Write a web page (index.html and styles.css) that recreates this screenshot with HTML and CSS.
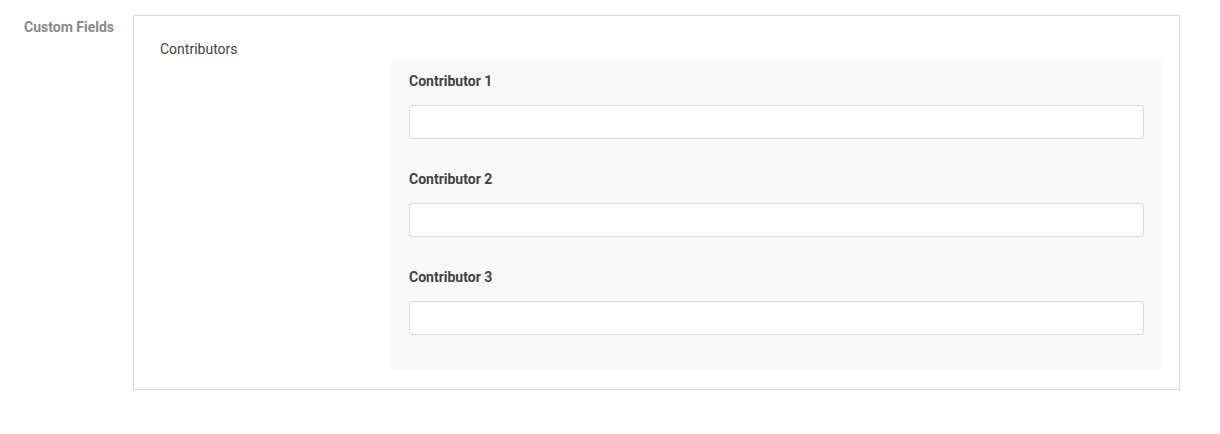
FILE: index.html
```html
<!DOCTYPE html>
<html>
<head>
<meta charset="utf-8">
<link rel="stylesheet" href="styles.css">
</head>
<body>
<div class="page">
  <div class="section-label">Custom Fields</div>
  <div class="box">
    <div class="field-title">Contributors</div>
    <div class="panel">
      <div class="group">
        <label class="sub-label">Contributor 1</label>
        <input class="text-input" type="text">
      </div>
      <div class="group">
        <label class="sub-label">Contributor 2</label>
        <input class="text-input" type="text">
      </div>
      <div class="group">
        <label class="sub-label">Contributor 3</label>
        <input class="text-input" type="text">
      </div>
    </div>
  </div>
</div>
</body>
</html>
```

FILE: styles.css
```css
* { box-sizing: border-box; }
html, body { margin: 0; padding: 0; background: #fff; }
body { font-family: Roboto, "Liberation Sans", sans-serif; }

.page {
  display: flex;
  padding: 15px 0 0 24px;
}

.section-label {
  width: 109px;
  flex: none;
  font-size: 14px;
  font-weight: 700;
  color: #8a8a8a;
  line-height: 20px;
  padding-top: 2px;
}

.box {
  width: 1047px;
  border: 1px solid #d5dce4;
  display: flex;
  padding: 22px 17px 19px 26px;
}

.field-title {
  width: 231px;
  flex: none;
  font-size: 14px;
  line-height: 20px;
  color: #444;
  padding-top: 1px;
}

.panel {
  width: 771px;
  margin-top: 21px;
  background: #f9f9f9;
  border-radius: 3px;
  padding: 12px 18px 5px 18px;
}

.group {
  display: flex;
  flex-direction: column;
  margin-bottom: 30px;
}

.sub-label {
  font-size: 14px;
  font-weight: 700;
  line-height: 20px;
  color: #424242;
  margin-bottom: 14px;
}

.text-input {
  height: 34px;
  width: 100%;
  border: 1px solid #d3dae3;
  border-radius: 3px;
  background: #fff;
  margin: 0;
  padding: 0 8px;
  font: inherit;
}
```
